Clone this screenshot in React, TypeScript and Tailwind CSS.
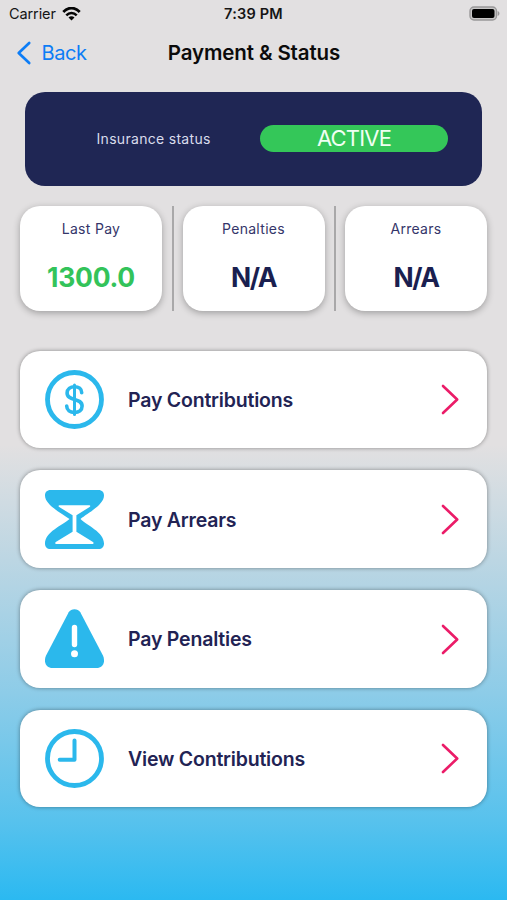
import React, { FC, ReactNode } from "react";

const DollarIcon: FC = () => (
  <svg className="size-[59px]" viewBox="0 0 59 59" fill="none" stroke="#2bb8ec">
    <circle cx="29.5" cy="29.5" r="27" strokeWidth="4.8" />
    <path
      d="M36.7 22.7c0-4-3.1-6-7.2-6s-7.4 2.4-7.4 6.3c0 4.2 3.4 5.3 7.4 6.4s7.6 2.300 7.6 6.700c0 4.200-3.300 6.400-7.600 6.400s-7.800-2.400-7.800-6.400"
      strokeWidth="3.6"
      strokeLinecap="round"
    />
    <path d="M29.5 15v29.5" strokeWidth="3" strokeLinecap="round" />
  </svg>
);

const HourglassIcon: FC = () => (
  <svg className="size-[59px]" viewBox="0 0 59 59">
    <path
      d="M5.5 0h48C57 0 59 2.3 59 5.5C59 15 42 23.5 35.5 29C42 35.5 59 42 59 53.5C59 57 57 59 53.5 59h-48C2 59 0 57 0 53.5C0 42 17 35.5 24.5 29C17 23.5 0 15 0 5.5C0 2.3 2 0 5.5 0z"
      fill="#2bb8ec"
    />
    <path
      d="M14.5 15.2h29.8c1.2 0 1.3 1.2.3 1.8L31.4 25.300V41.700L48 52c1 .8.6 2-.6 2H11.400c-1.200 0-1.600-1.200-.6-2L27.600 41.700V25.300L14.200 17c-1-.6-.9-1.800.3-1.800z"
      fill="#ffffff"
    />
  </svg>
);

const WarningIcon: FC = () => (
  <svg className="size-[59px]" viewBox="0 0 59 59">
    <path
      d="M23.7 3.3C26-.9 33-.9 35.3 3.3L57.8 46.3C61 53 57.8 59 51.5 59H7.5C1.2 59-2 53 1.2 46.3z"
      fill="#2bb8ec"
    />
    <path d="M29.5 18.5v17" stroke="#ffffff" strokeWidth="5.4" strokeLinecap="round" />
    <circle cx="29.5" cy="44.8" r="3.5" fill="#ffffff" />
  </svg>
);

const ClockIcon: FC = () => (
  <svg className="size-[59px]" viewBox="0 0 59 59" fill="none" stroke="#2bb8ec">
    <circle cx="29.5" cy="29.5" r="27" strokeWidth="4.8" />
    <path
      d="M29.5 11.5v19.3H14.7"
      strokeWidth="4"
      strokeLinecap="round"
      strokeLinejoin="round"
    />
  </svg>
);

const Chevron: FC = () => (
  <svg
    className="h-[32px] w-[20px]"
    viewBox="0 0 20 32"
    fill="none"
    stroke="#eb1c68"
    strokeWidth="2.6"
    strokeLinecap="round"
    strokeLinejoin="round"
  >
    <path d="M3 3L17.2 16.5L3 30" />
  </svg>
);

type StatProps = { label: string; value: string; valueClass: string };

const Stat: FC<StatProps> = ({ label, value, valueClass }) => (
  <div className="flex h-[105px] w-[142px] flex-col items-center rounded-[20px] bg-white pt-[13px] shadow-[0_2px_7px_rgba(0,0,0,0.3)]">
    <span className="text-[14px] leading-[20px] tracking-[0.3px] text-[#35366a]">
      {label}
    </span>
    <span className={`mt-[22px] text-[26.5px] leading-[32px] font-bold ${valueClass}`}>
      {value}
    </span>
  </div>
);

const Divider: FC = () => (
  <div className="ml-[1px] h-[105px] w-[2px] bg-[#a9a8a9]" />
);

const rows: { label: string; icon: ReactNode }[] = [
  { label: "Pay Contributions", icon: <DollarIcon /> },
  { label: "Pay Arrears", icon: <HourglassIcon /> },
  { label: "Pay Penalties", icon: <WarningIcon /> },
  { label: "View Contributions", icon: <ClockIcon /> },
];

const StatusBar: FC = () => (
  <div className="grid h-[27px] grid-cols-[1fr_auto_1fr] items-center px-[8px] text-[14.5px] leading-[27px] text-[#151515]">
    <div className="flex items-center gap-[6px] pl-[1px]">
      <span className="tracking-[-0.1px]">Carrier</span>
      <svg className="h-[14px] w-[19px]" viewBox="0 0 19 14" fill="none" stroke="#050505">
        <path d="M1.3 5C6-.3 13-.3 17.7 5" strokeWidth="2.7" />
        <path d="M4.3 8.3c3-3.2 7.4-3.2 10.4 0" strokeWidth="2.5" />
        <path d="M9.5 13.5L6.5 10.6c1.7-1.7 4.3-1.7 6 0z" fill="#050505" stroke="none" />
      </svg>
    </div>
    <span className="text-center font-semibold tracking-[0.2px]">7:39 PM</span>
    <svg className="-mr-[1px] h-[15px] w-[31px] justify-self-end" viewBox="0 0 31 15">
      <rect x="1" y="1" width="26.5" height="13" rx="4" fill="#c8c7c7" stroke="#999899" strokeWidth="1.4" />
      <rect x="3" y="3" width="22.5" height="9" rx="2" fill="#000000" />
      <path d="M28.7 5v5c2.3-.9 2.3-4.1 0-5z" fill="#999899" />
    </svg>
  </div>
);

const NavBar: FC = () => (
  <div className="grid h-[50px] grid-cols-[1fr_auto_1fr] items-center px-[16px] pt-[1px]">
    <div className="flex items-center gap-[9.5px] text-[#0d7df6]">
      <svg
        className="h-[24px] w-[16px]"
        viewBox="0 0 16 24"
        fill="none"
        stroke="currentColor"
        strokeWidth="2.7"
        strokeLinecap="round"
        strokeLinejoin="round"
      >
        <path d="M13.2 2L2.7 12L13.2 22" />
      </svg>
      <span className="text-[20px] leading-[26px] tracking-[-0.4px]">Back</span>
    </div>
    <h1 className="ml-[1px] text-[20.5px] leading-[26px] font-semibold tracking-[-0.12px] text-[#0b0b0b]">
      Payment &amp; Status
    </h1>
  </div>
);

export const App: FC = () => {
  return (
    <div className="h-[900px] w-[507px] overflow-hidden bg-[linear-gradient(to_bottom,#e2e0e1_0px,#e2e0e1_445px,#bcd6e3_560px,#8dcce8_693px,#58c2ed_820px,#2bb9f1_900px)] font-['Inter',sans-serif]">
      <StatusBar />
      <NavBar />

      <main className="px-[20px] pt-[14.5px]">
        <section className="mx-[5px] flex h-[94.5px] items-center rounded-[20px] bg-[#1f2654] pl-[71.5px]">
          <span className="w-[163.5px] text-[14px] leading-[20px] tracking-[0.3px] text-[#d9dcec]">
            Insurance status
          </span>
          <span className="h-[27px] w-[188px] rounded-full bg-[#34c759] text-center text-[22px] leading-[27px] tracking-[-0.8px] text-[#effff2]">
            ACTIVE
          </span>
        </section>

        <section className="mt-[20px] flex items-center justify-between">
          <Stat label="Last Pay" value="1300.0" valueClass="tracking-[-0.25px] text-[#33c35a]" />
          <Divider />
          <Stat label="Penalties" value="N/A" valueClass="tracking-[-1.6px] text-[#1a1f50]" />
          <Divider />
          <Stat label="Arrears" value="N/A" valueClass="tracking-[-1.6px] text-[#1a1f50]" />
        </section>

        <section className="mt-[39.5px] flex flex-col gap-[22px]">
          {rows.map((row) => (
            <div
              key={row.label}
              className="flex h-[97.7px] items-center rounded-[20px] bg-white pr-[27px] pl-[24.5px] shadow-[0_0_4px_rgba(0,0,0,0.4)]"
            >
              {row.icon}
              <span className="ml-[24.5px] flex-1 pt-[1px] text-[19.5px] leading-[26px] font-semibold tracking-[-0.2px] text-[#222354]">
                {row.label}
              </span>
              <Chevron />
            </div>
          ))}
        </section>
      </main>
    </div>
  );
};

export default App;
